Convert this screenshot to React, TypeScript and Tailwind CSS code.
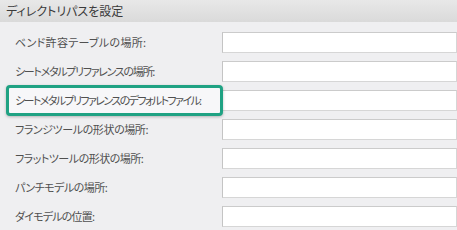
import React from "react";

const labels: { t: string; c: string }[] = [
  { t: "ベンド許容テーブルの場所:", c: "tracking-[0.3px]" },
  { t: "シートメタルプリファレンスの場所:", c: "tracking-[-1.3px]" },
  { t: "シートメタルプリファレンスのデフォルトファイル:", c: "tracking-[-1.6px]" },
  { t: "フランジツールの形状の場所:", c: "tracking-[-0.4px]" },
  { t: "フラットツールの形状の場所:", c: "tracking-[-0.5px]" },
  { t: "パンチモデルの場所:", c: "tracking-[-0.5px]" },
  { t: "ダイモデルの位置:", c: "tracking-[-0.8px]" },
];

export default function App() {
  return (
    <div
      className="w-[457px] h-[230px] overflow-hidden bg-[#efeff1] text-[#505050]"
      style={{ fontFamily: '"Noto Sans CJK JP", "Noto Sans", sans-serif', fontFeatureSettings: '"palt"' }}
    >
      <div className="h-[22px] bg-gradient-to-b from-[#e8e8e8] to-[#dadada] flex items-center pl-[6px] text-[12px] text-[#3a3a3a]">
        ディレクトリパスを設定
      </div>
      <div className="pt-[10px] flex flex-col gap-[8px]">
        {labels.map((l, i) => (
          <div key={i} className="relative flex h-[21px] items-center">
            <div className={`w-[222px] pl-[15px] text-[11px] leading-none whitespace-nowrap ${l.c}`}>{l.t}</div>
            <div className="flex-1 h-[21px] bg-white border border-[#d6d6d6] border-t-[#cbcbcb] border-l-[#c4c4c4]" />
            {i === 2 && (
              <div
                className={`absolute left-[6px] w-[217px] top-[-5px] bottom-[-5px] rounded-[4px] border-[3px] border-[#1fa283] shadow-[0_1px_3px_rgba(0,0,0,0.25)] bg-[#f7f7f9] flex items-center pl-[6px] text-[11px] leading-none whitespace-nowrap ${l.c}`}
              >
                {l.t}
              </div>
            )}
          </div>
        ))}
      </div>
    </div>
  );
}
